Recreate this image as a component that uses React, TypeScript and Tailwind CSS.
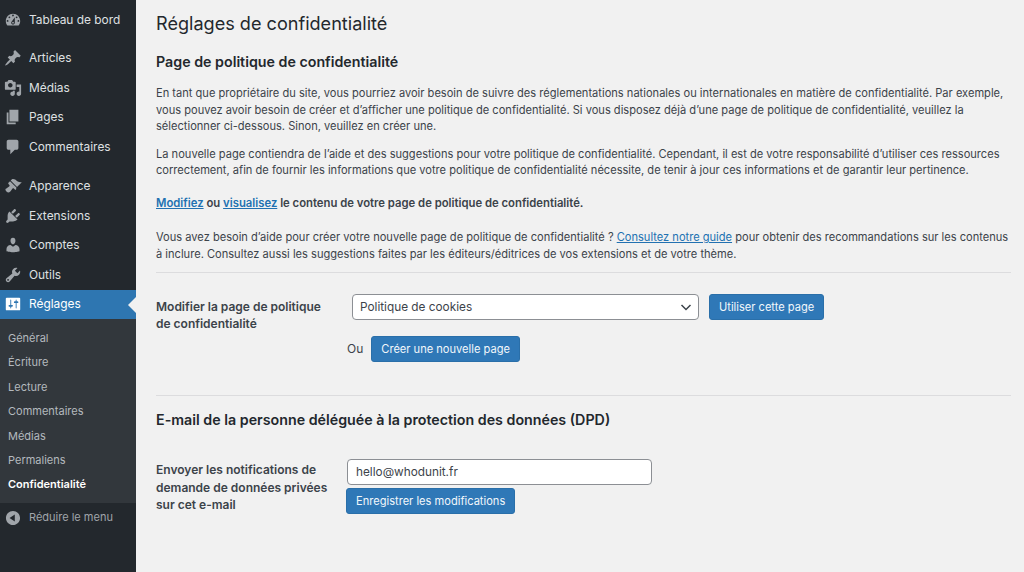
import React from "react";

const P: Record<string, string> = {
  dash: "M3.76 16h12.48c1.1-1.37 1.76-3.11 1.76-5 0-4.42-3.58-8-8-8s-8 3.58-8 8c0 1.89.66 3.63 1.76 5zM10 4c.55 0 1 .45 1 1s-.45 1-1 1-1-.45-1-1 .45-1 1-1zM6 6c.55 0 1 .45 1 1s-.45 1-1 1-1-.45-1-1 .45-1 1-1zm8 0c.55 0 1 .45 1 1s-.45 1-1 1-1-.45-1-1 .45-1 1-1zm-5.37 5.55L12 7v6c0 1.1-.9 2-2 2s-2-.9-2-2c0-.57.24-1.08.63-1.45zM4 10c.55 0 1 .45 1 1s-.45 1-1 1-1-.45-1-1 .45-1 1-1zm12 0c.55 0 1 .45 1 1s-.45 1-1 1-1-.45-1-1 .45-1 1-1zm-5 3c0-.55-.45-1-1-1s-1 .45-1 1 .45 1 1 1 1-.45 1-1z",
  post: "M10.44 3.02l1.82-1.82 6.36 6.35-1.83 1.82c-1.05-.68-2.48-.57-3.41.36l-.75.75c-.92.93-1.04 2.35-.35 3.41l-1.83 1.82-2.41-2.41-2.8 2.79c-.42.42-3.38 2.71-3.8 2.29s1.86-3.39 2.28-3.81l2.79-2.79L4.1 9.36l1.83-1.82c1.05.69 2.48.57 3.4-.36l.75-.75c.93-.92 1.05-2.35.36-3.41z",
  media: "M13 11V4c0-.55-.45-1-1-1h-1.67L9 1H5L3.67 3H2c-.55 0-1 .45-1 1v7c0 .55.45 1 1 1h10c.55 0 1-.45 1-1zM7 4.5c1.38 0 2.5 1.12 2.5 2.5S8.38 9.5 7 9.5 4.5 8.38 4.5 7 5.62 4.5 7 4.5zM14 6h5v10.5c0 1.38-1.12 2.5-2.5 2.5S14 17.88 14 16.5s1.12-2.5 2.5-2.5c.17 0 .34.02.5.05V9h-3V6zm-4 8.05V13h2v3.5c0 1.38-1.12 2.5-2.5 2.5S7 17.88 7 16.5 8.12 14 9.5 14c.17 0 .34.02.5.05z",
  page: "M6 15V2h10v13H6zm-1 1h8v2H3V5h2v11z",
  comment: "M5 2h9c1.1 0 2 .9 2 2v7c0 1.1-.9 2-2 2h-2l-5 5v-5H5c-1.1 0-2-.9-2-2V4c0-1.1.9-2 2-2z",
  appearance: "M14.48 11.06L7.41 3.99l1.5-1.5c.5-.56 2.3-.47 3.51.32 1.21.8 1.43 1.28 2.91 2.1 1.18.64 2.45 1.26 4.45.85zm-.71.71L6.7 4.7 4.93 6.47c-.39.39-.39 1.02 0 1.41l1.06 1.06c.39.39.39 1.03 0 1.42-.6.6-1.43 1.11-2.21 1.69-.35.26-.7.53-1.01.84C1.43 13.23.91 14.4 2.7 16.2c1.8 1.8 2.97 1.27 4.31-.08.31-.31.58-.66.85-1.02.57-.78 1.08-1.61 1.69-2.21.39-.39 1.02-.39 1.41 0l1.06 1.06c.39.39 1.02.39 1.41 0z",
  plugin: "M13.11 4.36L9.87 7.6 8 5.73l3.24-3.24c.35-.34 1.05-.2 1.56.32.52.51.66 1.21.31 1.55zm-8 1.77l.91-1.12 9.01 9.01-1.19.84c-.71.71-2.63 1.16-3.82 1.16H6.14L4.9 17.26c-.59.59-1.54.59-2.12 0-.59-.58-.59-1.53 0-2.12l1.24-1.24v-3.88c0-1.13.4-3.19 1.09-3.89zm7.26 3.97l3.24-3.24c.34-.35 1.04-.21 1.55.31.52.51.66 1.21.31 1.55l-3.24 3.25z",
  users: "M10 9.25c-2.27 0-2.73-3.44-2.73-3.44C7 4.02 7.82 2 9.97 2c2.16 0 2.98 2.02 2.71 3.81 0 0-.41 3.44-2.68 3.44zm0 2.57L12.72 10c2.39 0 4.52 2.33 4.52 4.53v2.49s-3.65 1.13-7.24 1.13c-3.65 0-7.24-1.13-7.24-1.13v-2.49c0-2.25 1.94-4.48 4.47-4.48z",
  tools: "M16.68 9.77c-1.34 1.34-3.3 1.67-4.95.99l-5.41 6.52c-.99.99-2.59.99-3.58 0s-.99-2.59 0-3.57l6.52-5.42c-.68-1.65-.35-3.61.99-4.95 1.28-1.28 3.12-1.62 4.72-1.06l-2.89 2.89 2.82 2.82 2.86-2.87c.53 1.58.18 3.39-1.08 4.67zM3.81 16.21c.4.39 1.04.39 1.43 0 .4-.4.4-1.04 0-1.43-.39-.4-1.03-.4-1.43 0-.39.39-.39 1.03 0 1.43z",
  settings: "M18 16V4c0-.55-.45-1-1-1H3c-.55 0-1 .45-1 1v12c0 .55.45 1 1 1h14c.55 0 1-.45 1-1zM8 11h1c.55 0 1 .45 1 1s-.45 1-1 1H8v1.5c0 .28-.22.5-.5.5s-.5-.22-.5-.5V13H6c-.55 0-1-.45-1-1s.45-1 1-1h1V5.5c0-.28.22-.5.5-.5s.5.22.5.5V11zm5-2h-1c-.55 0-1-.45-1-1s.45-1 1-1h1V5.5c0-.28.22-.5.5-.5s.5.22.5.5V7h1c.55 0 1 .45 1 1s-.45 1-1 1h-1v5.5c0 .28-.22.5-.5.5s-.5-.22-.5-.5V9z",
  collapse: "M10 2.16c4.33 0 7.84 3.51 7.84 7.84s-3.51 7.84-7.84 7.84S2.16 14.33 2.16 10 5.71 2.16 10 2.16zm2 11.72V6.12L6.18 9.97z",
};

function Icon({ name, className = "fill-[#a0a5aa]" }: { name: string; className?: string }) {
  return (
    <svg viewBox="0 0 20 20" className={`w-[18px] h-[18px] shrink-0 ${className}`}>
      <path d={P[name]} fillRule="evenodd" />
    </svg>
  );
}

function Item({ icon, label }: { icon: string; label: string }) {
  return (
    <div className="h-[29.5px] flex items-center pl-[4px] gap-[7px] text-[11.9px] text-[#dfe0e2]">
      <Icon name={icon} />
      <span>{label}</span>
    </div>
  );
}

function Sub({ label, active }: { label: string; active?: boolean }) {
  return (
    <div className={`h-[24.4px] flex items-center pl-[8px] text-[11px] ${active ? "font-semibold text-white" : "text-[#b4b9be]"}`}>
      {label}
    </div>
  );
}

const btn = "h-[26px] px-[9px] rounded-[3px] bg-[#2f78b7] border border-[#2a6fa9] text-[#f2f7fb] text-[11.1px] flex items-center whitespace-nowrap";

export default function App() {
  return (
    <div className="w-[1024px] h-[572px] overflow-hidden flex bg-[#f1f1f1] font-['Inter','Liberation_Sans',sans-serif] text-[#3c434a]">
      <aside className="w-[136px] h-full shrink-0 bg-[#23282d] flex flex-col">
        <div className="pt-[5px] pb-[9px]">
          <Item icon="dash" label="Tableau de bord" />
        </div>
        <Item icon="post" label="Articles" />
        <Item icon="media" label="Médias" />
        <Item icon="page" label="Pages" />
        <Item icon="comment" label="Commentaires" />
        <div className="h-[10px]" />
        <Item icon="appearance" label="Apparence" />
        <Item icon="plugin" label="Extensions" />
        <Item icon="users" label="Comptes" />
        <Item icon="tools" label="Outils" />
        <div className="relative h-[29.5px] flex items-center pl-[4px] gap-[7px] text-[11.9px] text-white bg-[#2e76b1]">
          <Icon name="settings" className="fill-white" />
          <span>Réglages</span>
          <div className="absolute right-0 top-[7px] w-0 h-0 border-y-[8px] border-y-transparent border-r-[8px] border-r-[#f1f1f1]" />
        </div>
        <div className="bg-[#32373c] pt-[7px] pb-[6px]">
          <Sub label="Général" />
          <Sub label="Écriture" />
          <Sub label="Lecture" />
          <Sub label="Commentaires" />
          <Sub label="Médias" />
          <Sub label="Permaliens" />
          <Sub label="Confidentialité" active />
        </div>
        <div className="h-[30px] flex items-center pl-[4px] gap-[7px] text-[11px] text-[#a0a5aa]">
          <Icon name="collapse" />
          <span>Réduire le menu</span>
        </div>
      </aside>

      <main className="flex-1 pl-[20px] pr-[13px] text-[11.1px] leading-[16.5px]">
        <h1 className="text-[18.1px] leading-[24px] font-normal text-[#23282d] pt-[11px]">Réglages de confidentialité</h1>
        <h2 className="text-[14.25px] leading-[18px] font-semibold text-[#23282d] mt-[18px]">Page de politique de confidentialité</h2>
        <p className="mt-[14px] whitespace-nowrap">
          En tant que propriétaire du site, vous pourriez avoir besoin de suivre des réglementations nationales ou internationales en matière de confidentialité. Par exemple,<br />
          vous pouvez avoir besoin de créer et d’afficher une politique de confidentialité. Si vous disposez déjà d’une page de politique de confidentialité, veuillez la<br />
          sélectionner ci-dessous. Sinon, veuillez en créer une.
        </p>
        <p className="mt-[11px] whitespace-nowrap">
          La nouvelle page contiendra de l’aide et des suggestions pour votre politique de confidentialité. Cependant, il est de votre responsabilité d’utiliser ces ressources<br />
          correctement, afin de fournir les informations que votre politique de confidentialité nécessite, de tenir à jour ces informations et de garantir leur pertinence.
        </p>
        <p className="mt-[16px] font-semibold text-[11.3px] whitespace-nowrap">
          <a className="text-[#2271b1] underline">Modifiez</a> ou <a className="text-[#2271b1] underline">visualisez</a> le contenu de votre page de politique de confidentialité.
        </p>
        <p className="mt-[18px] whitespace-nowrap">
          Vous avez besoin d’aide pour créer votre nouvelle page de politique de confidentialité ? <a className="text-[#2271b1] underline">Consultez notre guide</a> pour obtenir des recommandations sur les contenus<br />
          à inclure. Consultez aussi les suggestions faites par les éditeurs/éditrices de vos extensions et de votre thème.
        </p>
        <div className="h-px bg-[#dcdcde] mt-[10px]" />

        <div className="flex items-start mt-[21px]">
          <div className="w-[196px] font-semibold text-[12px] pt-[4px] leading-[17px]">
            Modifier la page de politique<br />de confidentialité
          </div>
          <div className="flex items-center gap-[10px]">
            <div className="w-[347px] h-[26px] bg-white border border-[#8c8f94] rounded-[4px] flex items-center justify-between pl-[7px] pr-[6px] text-[11.800px] text-[#3c434a]">
              <span>Politique de cookies</span>
              <svg viewBox="0 0 12 12" className="w-[12px] h-[12px] fill-none stroke-[#3c434a] stroke-[1.5]"><path d="M1.5 4l4.5 4.5L10.500 4" /></svg>
            </div>
            <div className={btn}>Utiliser cette page</div>
          </div>
        </div>
        <div className="flex items-center gap-[8px] mt-[4px] pl-[191px]">
          <span className="text-[12px]">Ou</span>
          <div className={btn}>Créer une nouvelle page</div>
        </div>

        <div className="h-px bg-[#dcdcde] mt-[33px]" />
        <h2 className="text-[14.25px] leading-[18px] font-semibold text-[#23282d] mt-[15px]">E-mail de la personne déléguée à la protection des données (DPD)</h2>

        <div className="flex mt-[30px]">
          <div className="w-[191px] font-semibold text-[12px] leading-[17.500px] pt-[2px]">
            Envoyer les notifications de<br />demande de données privées<br />sur cet e-mail
          </div>
          <div className="flex flex-col items-start gap-[3px]">
            <div className="w-[305px] h-[26px] bg-white border border-[#8c8f94] rounded-[4px] flex items-center pl-[8px] text-[11.800px]">hello@whodunit.fr</div>
            <div className={`${btn} ml-[-1px]`}>Enregistrer les modifications</div>
          </div>
        </div>
      </main>
    </div>
  );
}
